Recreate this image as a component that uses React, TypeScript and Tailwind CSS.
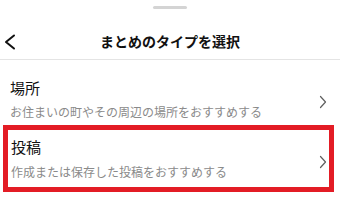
const font = { fontFamily: '"Noto Sans CJK JP", "Noto Sans", sans-serif' }

function Chevron() {
  return (
    <svg width="8" height="14" viewBox="0 0 8 14" className="shrink-0">
      <polyline points="1.5,1.5 6.5,7 1.5,12.5" fill="none" stroke="#5f5f5f" strokeWidth="1.2" strokeLinecap="round" strokeLinejoin="round" />
    </svg>
  )
}

export default function App() {
  return (
    <div className="w-[340px] h-[218px] bg-white overflow-hidden" style={font}>
      <div className="h-[22px] pt-[6px] flex justify-center">
        <div className="w-[34px] h-[3px] rounded-full bg-[#d4d4d4]" />
      </div>
      <div className="h-[38px] border-b border-[#e4e4e4] grid grid-cols-[40px_1fr_40px] items-center">
        <svg width="16" height="16" viewBox="0 0 16 16" className="mt-[3px]">
          <polyline points="14,1.5 6,8 14,14.5" fill="none" stroke="#111" strokeWidth="2" strokeLinecap="round" strokeLinejoin="round" />
        </svg>
        <div className="text-center text-[14px] font-bold text-[#111] leading-5">まとめのタイプを選択</div>
        <div />
      </div>

      <div className="flex items-center pl-[10px] pr-[13px] pt-[18px] h-[65px]">
        <div className="flex-1 flex flex-col gap-[6px] self-start">
          <div className="text-[15px] leading-5 text-[#111]">場所</div>
          <div className="text-[12px] leading-4 text-[#8a8a8a]">お住まいの町やその周辺の場所をおすすめする</div>
        </div>
        <div className="self-start mt-[17px]">
          <Chevron />
        </div>
      </div>

      <div className="ml-[3px] mr-[6px] border-[5px] border-[#e31c25] h-[67px] flex items-start pl-[3px] pr-[2px] pt-[7px]">
        <div className="flex-1 flex flex-col gap-[7px]">
          <div className="text-[15px] leading-5 text-[#111]">投稿</div>
          <div className="text-[12px] leading-4 text-[#8a8a8a]">作成または保存した投稿をおすすめする</div>
        </div>
        <div className="mt-[18px]">
          <Chevron />
        </div>
      </div>
    </div>
  )
}
